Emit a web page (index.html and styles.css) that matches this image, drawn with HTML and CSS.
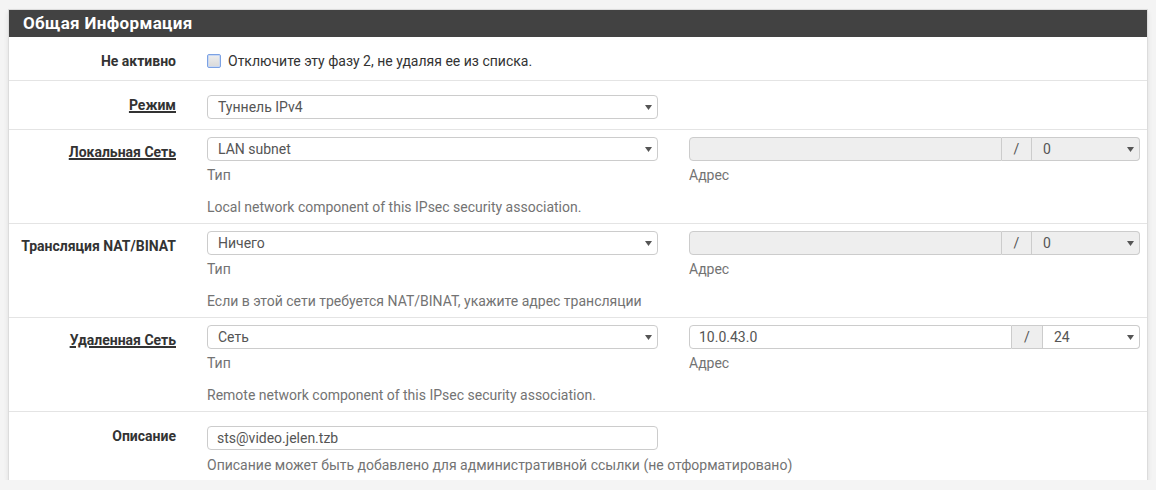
FILE: index.html
```html
<!DOCTYPE html>
<html lang="ru">
<head>
<meta charset="utf-8">
<title>Общая Информация</title>
<link rel="stylesheet" href="styles.css">
</head>
<body>
<div class="page">
  <div class="panel">
    <div class="panel-heading"><h2 class="panel-title">Общая Информация</h2></div>
    <div class="panel-body">

      <div class="row row-check">
        <div class="label">Не активно</div>
        <div class="ctrl span2">
          <label class="check"><span class="box"></span>Отключите эту фазу 2, не удаляя ее из списка.</label>
        </div>
      </div>

      <div class="row row-simple">
        <div class="label"><span class="req">Режим</span></div>
        <div class="ctrl">
          <div class="select"><span>Туннель IPv4</span><svg class="caret" width="7" height="5" viewBox="0 0 7 5"><path d="M0 0H7L3.5 5Z"/></svg></div>
        </div>
      </div>

      <div class="row row-net">
        <div class="label label-net"><span class="req">Локальная Сеть</span></div>
        <div class="ctrl">
          <div class="select"><span>LAN subnet</span><svg class="caret" width="7" height="5" viewBox="0 0 7 5"><path d="M0 0H7L3.5 5Z"/></svg></div>
          <div class="sub">Тип</div>
          <div class="help">Local network component of this IPsec security association.</div>
        </div>
        <div class="ctrl">
          <div class="igroup is-disabled">
            <div class="ig-input"></div>
            <div class="ig-addon">/</div>
            <div class="select ig-select"><span>0</span><svg class="caret" width="7" height="5" viewBox="0 0 7 5"><path d="M0 0H7L3.5 5Z"/></svg></div>
          </div>
          <div class="sub">Адрес</div>
        </div>
      </div>

      <div class="row row-net">
        <div class="label label-net">Трансляция NAT/BINAT</div>
        <div class="ctrl">
          <div class="select"><span>Ничего</span><svg class="caret" width="7" height="5" viewBox="0 0 7 5"><path d="M0 0H7L3.5 5Z"/></svg></div>
          <div class="sub">Тип</div>
          <div class="help">Если в этой сети требуется NAT/BINAT, укажите адрес трансляции</div>
        </div>
        <div class="ctrl">
          <div class="igroup is-disabled">
            <div class="ig-input"></div>
            <div class="ig-addon">/</div>
            <div class="select ig-select"><span>0</span><svg class="caret" width="7" height="5" viewBox="0 0 7 5"><path d="M0 0H7L3.5 5Z"/></svg></div>
          </div>
          <div class="sub">Адрес</div>
        </div>
      </div>

      <div class="row row-net">
        <div class="label label-net"><span class="req">Удаленная Сеть</span></div>
        <div class="ctrl">
          <div class="select"><span>Сеть</span><svg class="caret" width="7" height="5" viewBox="0 0 7 5"><path d="M0 0H7L3.5 5Z"/></svg></div>
          <div class="sub">Тип</div>
          <div class="help">Remote network component of this IPsec security association.</div>
        </div>
        <div class="ctrl">
          <div class="igroup igroup-wide">
            <div class="ig-input">10.0.43.0</div>
            <div class="ig-addon">/</div>
            <div class="select ig-select"><span>24</span><svg class="caret" width="7" height="5" viewBox="0 0 7 5"><path d="M0 0H7L3.5 5Z"/></svg></div>
          </div>
          <div class="sub">Адрес</div>
        </div>
      </div>

      <div class="row row-desc">
        <div class="label">Описание</div>
        <div class="ctrl">
          <div class="input">sts@video.jelen.tzb</div>
        </div>
        <div class="help help-desc">Описание может быть добавлено для административной ссылки (не отформатировано)</div>
      </div>

    </div>
  </div>
</div>
</body>
</html>
```

FILE: styles.css
```css
* { box-sizing: border-box; }

html, body {
  margin: 0;
  padding: 0;
}

body {
  background: #f4f4f4;
  font-family: Roboto, "Liberation Sans", Arial, sans-serif;
  font-size: 14px;
  color: #333;
}

.page {
  padding: 9px 8px 0 8px;
}

.panel {
  width: 1140px;
  background: #fff;
  border: 1px solid #dcdcdc;
  border-bottom: none;
  box-shadow: 0 3px 5px rgba(0, 0, 0, 0.09);
}

.panel-heading {
  background: #424242;
  height: 27px;
  padding: 0 14px;
}

.panel-title {
  margin: 0;
  color: #fff;
  font-size: 17px;
  font-weight: bold;
  line-height: 27px;
  letter-spacing: 0.35px;
}

.row {
  display: grid;
  grid-template-columns: 167px 451px 451px;
  column-gap: 31px;
  padding-right: 7px;
  border-bottom: 1px solid #e4e4e4;
  line-height: 20px;
}

.row:last-child {
  border-bottom: none;
}

.label {
  text-align: right;
  font-weight: bold;
  color: #333;
  line-height: 20px;
}

.req {
  text-decoration: underline;
  text-decoration-thickness: 2px;
  text-underline-offset: 1px;
}

.span2 {
  grid-column: 2 / 4;
}

/* row variants */
.row-check {
  padding-top: 14px;
  padding-bottom: 9px;
}

.row-simple {
  padding-top: 14px;
  padding-bottom: 10px;
}

.row-net {
  padding-top: 7px;
  padding-bottom: 6px;
}

.label-net {
  margin-top: 5px;
}

.row-desc {
  padding-top: 14px;
  padding-bottom: 5px;
}

/* checkbox */
.check {
  display: flex;
  align-items: center;
  color: #333;
}

.box {
  display: inline-block;
  width: 14px;
  height: 14px;
  margin-right: 7px;
  border: 1px solid #7ca2e4;
  border-radius: 2px;
  background: linear-gradient(#eeeeee, #d9d9d9);
  box-shadow: inset 0 0 0 1px #c9d8f2;
}

/* selects and inputs */
.select {
  display: flex;
  align-items: center;
  justify-content: space-between;
  height: 24px;
  border: 1px solid #ccc;
  border-radius: 4px;
  padding: 0 5px 0 10px;
  color: #555;
  background: #fff;
  line-height: 22px;
}

.caret {
  fill: #555;
  flex: none;
}

.input {
  height: 24px;
  border: 1px solid #ccc;
  border-radius: 4px;
  padding: 0 9px;
  color: #555;
  background: #fff;
  line-height: 22px;
}

.sub {
  margin-top: 4px;
  color: #737373;
}

.help {
  margin-top: 12px;
  color: #737373;
}

.help-desc {
  grid-column: 2 / 4;
  margin-top: 5px;
}

/* input group */
.igroup {
  display: flex;
  height: 24px;
  color: #555;
  line-height: 22px;
}

.ig-input {
  width: 313px;
  border: 1px solid #ccc;
  border-radius: 4px 0 0 4px;
  padding: 0 9px;
  background: #fff;
}

.ig-addon {
  width: 30px;
  border: 1px solid #ccc;
  border-left: none;
  background: #eee;
  text-align: center;
}

.ig-select {
  flex: 1;
  border-left: none;
  border-radius: 0 4px 4px 0;
  padding-left: 11px;
}

.is-disabled .ig-input,
.is-disabled .ig-select {
  background: #eee;
}

.igroup-wide .ig-input {
  width: 323px;
}

.igroup-wide .ig-addon {
  width: 31px;
}
```
